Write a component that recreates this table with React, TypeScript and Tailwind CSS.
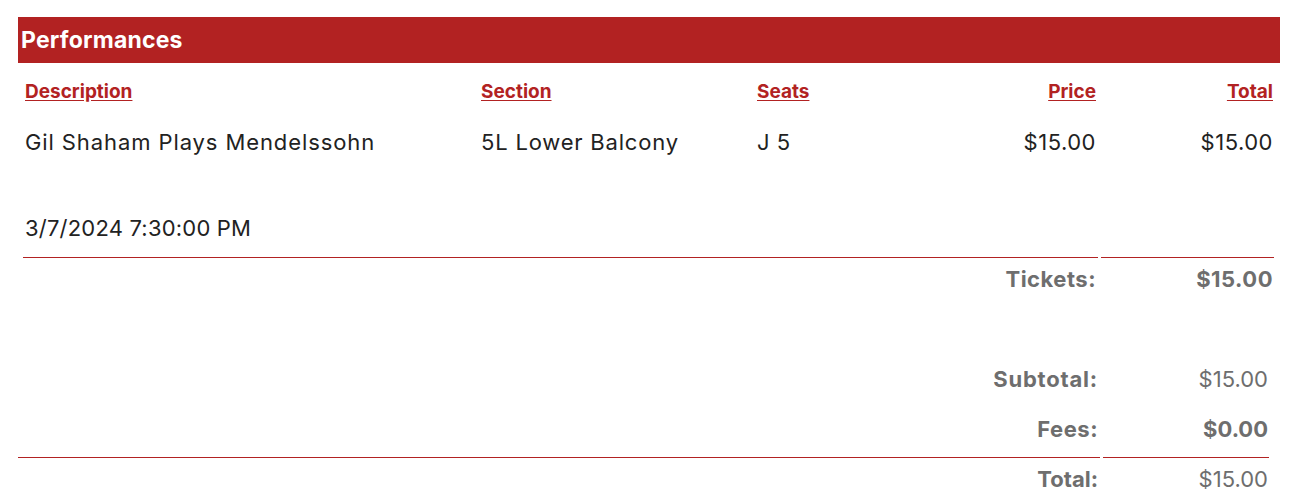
import React from 'react';

// Tipos
type Linha = {
  descricao: string;
  secao: string;
  assentos: string;
  preco: string;
  total: string;
  data: string;
};

const linhas: Linha[] = [
  {
    descricao: 'Gil Shaham Plays Mendelssohn',
    secao: '5L Lower Balcony',
    assentos: 'J 5',
    preco: '$15.00',
    total: '$15.00',
    data: '3/7/2024 7:30:00 PM',
  },
];

const fonte = { fontFamily: 'Inter, "Liberation Sans", sans-serif' };

export default function App() {
  return (
    <div className="bg-white w-[1316px] h-[504px] pt-[17px] pl-[18px]" style={fonte}>
      <div className="w-[1262px]">
        {/* Cabeçalho */}
        <div className="h-[46px] bg-[#b22222] flex items-center pl-[3px]">
          <h2 className="text-[23px] font-bold text-white tracking-[0.2px]">Performances</h2>
        </div>

        {/* Colunas */}
        <div className="flex items-center h-[58px] pl-[7px] pr-[7px] text-[19px] font-bold text-[#b22222] underline underline-offset-2 pt-[1px]">
          <div className="w-[456px]">Description</div>
          <div className="w-[276px]">Section</div>
          <div className="w-[200px]">Seats</div>
          <div className="flex-1 text-right">Price</div>
          <div className="w-[177px] text-right">Total</div>
        </div>

        {linhas.map((l) => (
          <div key={l.descricao} className="pl-[7px] pr-[7px] text-[22px] text-[#222] tracking-[0.5px]">
            <div className="flex items-center h-[42px]">
              <div className="w-[456px] tracking-[0.9px]">{l.descricao}</div>
              <div className="w-[276px] tracking-[0.8px]">{l.secao}</div>
              <div className="w-[200px]">{l.assentos}</div>
              <div className="flex-1 text-right">{l.preco}</div>
              <div className="w-[177px] text-right">{l.total}</div>
            </div>
            <div className="h-[44px]" />
            <div className="flex items-center h-[42px] tracking-[0.2px]">{l.data}</div>
          </div>
        ))}

        {/* Resumo dos ingressos */}
        <div className="flex gap-[3px] pl-[5px] mt-[8px] text-[22px] font-bold text-[#6e6e6e] tracking-[0.5px]">
          <div className="w-[1075px] border-t border-[#b22222] text-right pr-[2px] pt-[5px]">Tickets:</div>
          <div className="w-[173px] border-t border-[#b22222] text-right pr-[1px] pt-[5px]">$15.00</div>
        </div>

        {/* Totais */}
        <div className="mt-[58px] text-[22px] text-[#6e6e6e]">
          <div className="flex gap-[3px] h-[50px] items-center">
            <div className="w-[1082px] text-right pr-[2px] font-bold tracking-[0.8px]">Subtotal:</div>
            <div className="w-[166px] text-right pr-[1px]">$15.00</div>
          </div>
          <div className="flex gap-[3px] h-[50px] items-center">
            <div className="w-[1082px] text-right pr-[2px] font-bold tracking-[0.5px]">Fees:</div>
            <div className="w-[166px] text-right pr-[1px] font-bold">$0.00</div>
          </div>
          <div className="flex gap-[3px] mt-[3px]">
            <div className="w-[1082px] border-t border-[#b22222] text-right pr-[2px] pt-[5px] font-bold">Total:</div>
            <div className="w-[166px] border-t border-[#b22222] text-right pr-[1px] pt-[5px]">$15.00</div>
          </div>
        </div>
      </div>
    </div>
  );
}
